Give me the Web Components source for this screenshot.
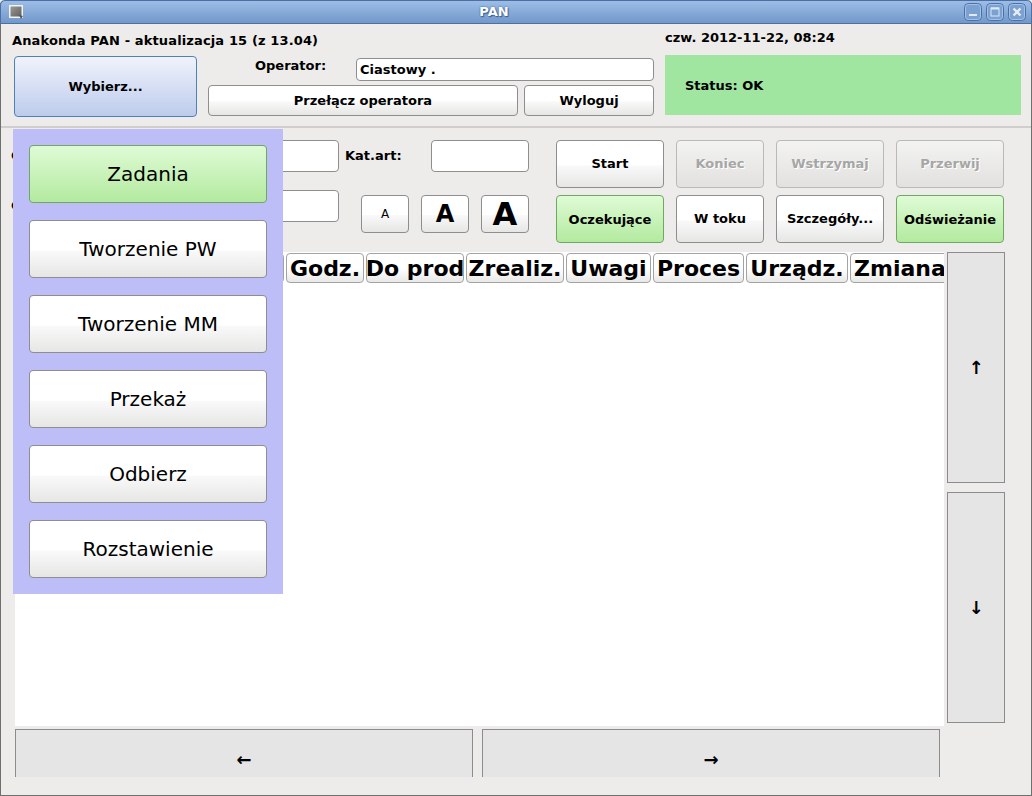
<!DOCTYPE html>
<html lang="pl">
<head>
<meta charset="utf-8">
<title>PAN</title>
<style>
  html, body { margin: 0; padding: 0; height: 100%; background: #edecea; }
  body { font: bold 13px "DejaVu Sans", sans-serif; color: #000; overflow: hidden; }
</style>
</head>
<body>
<pan-window>
  <pan-titlebar slot="title">PAN</pan-titlebar>

  <pan-header>
    <span slot="title">Anakonda PAN - aktualizacja 15 (z 13.04)</span>
    <pan-button slot="choose" variant="blue" style="width:183px;height:61px">Wybierz...</pan-button>
    <span slot="operator">Operator:</span>
    <pan-field slot="operator-field" style="width:298px;height:23px">Ciastowy .</pan-field>
    <pan-button slot="switch" style="width:310px;height:31px">Przełącz operatora</pan-button>
    <pan-button slot="logout" style="width:130px;height:31px">Wyloguj</pan-button>
    <span slot="date">czw. 2012-11-22, 08:24</span>
    <span slot="status">Status: OK</span>
  </pan-header>

  <pan-controls>
    <span slot="label1">C</span>
    <pan-field slot="field1" style="width:150px;height:32px"></pan-field>
    <span slot="label2">Kat.art:</span>
    <pan-field slot="field2" style="width:98px;height:32px"></pan-field>
    <span slot="label3">C</span>
    <pan-field slot="field3" style="width:150px;height:32px"></pan-field>
    <pan-button slot="size" style="width:48px;height:38px;font-size:12px;font-weight:normal">A</pan-button>
    <pan-button slot="size" style="width:48px;height:38px;font-size:24px">A</pan-button>
    <pan-button slot="size" style="width:48px;height:38px;font-size:32px">A</pan-button>

    <pan-button slot="action" lift>Start</pan-button>
    <pan-button slot="action" lift variant="disabled">Koniec</pan-button>
    <pan-button slot="action" lift variant="disabled">Wstrzymaj</pan-button>
    <pan-button slot="action" lift variant="disabled">Przerwij</pan-button>
    <pan-button slot="action" variant="green">Oczekujące</pan-button>
    <pan-button slot="action" lift>W toku</pan-button>
    <pan-button slot="action" lift>Szczegóły...</pan-button>
    <pan-button slot="action" variant="green">Odświeżanie</pan-button>
  </pan-controls>

  <pan-table>
    <pan-cell width="269"></pan-cell>
    <pan-cell width="78">Godz.</pan-cell>
    <pan-cell width="98">Do prod</pan-cell>
    <pan-cell width="98">Zrealiz.</pan-cell>
    <pan-cell width="85">Uwagi</pan-cell>
    <pan-cell width="91">Proces</pan-cell>
    <pan-cell width="102">Urządz.</pan-cell>
    <pan-cell width="100">Zmiana</pan-cell>
    <pan-flat slot="scroll" style="height:231px">↑</pan-flat>
    <pan-flat slot="scroll" style="height:231px">↓</pan-flat>
    <pan-flat slot="page" style="width:458px;height:60px">←</pan-flat>
    <pan-flat slot="page" style="width:458px;height:60px">→</pan-flat>
  </pan-table>

  <pan-menu slot="menu">
    <pan-button variant="green">Zadania</pan-button>
    <pan-button>Tworzenie PW</pan-button>
    <pan-button>Tworzenie MM</pan-button>
    <pan-button>Przekaż</pan-button>
    <pan-button>Odbierz</pan-button>
    <pan-button>Rozstawienie</pan-button>
  </pan-menu>
</pan-window>

<script>
// small helper, every element just stamps its markup into an open shadow root
class PanElement extends HTMLElement {
  constructor() {
    super();
    this.attachShadow({ mode: 'open' });
  }

  connectedCallback() {
    this.shadowRoot.innerHTML = this.markup();
  }
}

class PanWindow extends PanElement {
  markup() {
    return `
      <style>
        :host {
          display: flex;
          flex-direction: column;
          position: relative;
          box-sizing: border-box;
          width: 1032px;
          height: 796px;
          border: 1px solid #6f6f6f;
          border-top: 0;
          border-radius: 5px 5px 0 0;
          background: #edecea;
        }
        .menu {
          position: absolute;
          left: 12px;
          top: 129px;
        }
      </style>
      <slot name="title"></slot>
      <slot></slot>
      <div class="menu"><slot name="menu"></slot></div>
    `;
  }
}

class PanTitlebar extends PanElement {
  markup() {
    return `
      <style>
        :host {
          display: flex;
          align-items: center;
          flex: none;
          box-sizing: border-box;
          height: 24px;
          margin: 0 -1px;
          padding: 0 5px 1px 7px;
          background: linear-gradient(#9cbde6, #7298ca);
          border: 1px solid #4c70a4;
          border-radius: 5px 5px 0 0;
          color: #fff;
          font-weight: bold;
          font-size: 13px;
        }
        .name {
          flex: 1;
          text-align: center;
          text-shadow: 0 0 2px #3a5f96, 1px 1px 1px #3a5f96;
        }
        .icon { width: 16px; height: 16px; display: block; }
        .buttons { display: flex; gap: 4px; }
        .buttons svg { width: 18px; height: 18px; display: block; }
      </style>
      <svg class="icon" viewBox="0 0 16 16">
        <defs>
          <linearGradient id="ic" x1="0" y1="0" x2="1" y2="1">
            <stop offset="0" stop-color="#9a9a96"/>
            <stop offset="1" stop-color="#5f615e"/>
          </linearGradient>
        </defs>
        <rect x="1" y="1" width="14" height="13" fill="#f2f2f0"/>
        <rect x="2.5" y="2.5" width="11" height="10" fill="url(#ic)"/>
        <path d="M11 11l4 1-2 3z" fill="#555"/>
      </svg>
      <div class="name"><slot></slot></div>
      <div class="buttons">
        <svg viewBox="0 0 18 18">
          <rect x=".5" y=".5" width="17" height="17" rx="4" fill="#7ba0d2" stroke="#4c70a4"/>
          <rect x="1.5" y="1.5" width="15" height="15" rx="3" fill="none" stroke="#a5c1e6"/>
          <rect x="5" y="11" width="8" height="2" fill="#dfe9f7"/>
        </svg>
        <svg viewBox="0 0 18 18">
          <rect x=".5" y=".5" width="17" height="17" rx="4" fill="#7ba0d2" stroke="#4c70a4"/>
          <rect x="1.5" y="1.5" width="15" height="15" rx="3" fill="none" stroke="#a5c1e6"/>
          <rect x="5" y="5" width="8" height="8" fill="none" stroke="#dfe9f7" stroke-width="1"/>
          <rect x="5" y="4.5" width="8" height="2" fill="#dfe9f7"/>
        </svg>
        <svg viewBox="0 0 18 18">
          <rect x=".5" y=".5" width="17" height="17" rx="4" fill="#7ba0d2" stroke="#4c70a4"/>
          <rect x="1.5" y="1.5" width="15" height="15" rx="3" fill="none" stroke="#a5c1e6"/>
          <path d="M5.5 5.5l7 7M12.5 5.5l-7 7" stroke="#e6edf8" stroke-width="2.4"/>
        </svg>
      </div>
    `;
  }
}

class PanButton extends PanElement {
  markup() {
    return `
      <style>
        :host {
          display: flex;
          align-items: center;
          justify-content: center;
          box-sizing: border-box;
          border: 1px solid #8e8e8e;
          border-radius: 4px;
          background: linear-gradient(#fff 0, #fff 52%, #f9f9f9 54%, #e6e6e5 100%);
          white-space: nowrap;
          overflow: hidden;
        }
        :host([lift]) { padding-bottom: 2px; }
        :host([variant="green"]) {
          border-color: #6fa860;
          background: linear-gradient(#dffbd6, #b3ea9f);
        }
        :host([variant="blue"]) {
          border-color: #4d82b8;
          background: linear-gradient(#f0f3fc, #bdcbec);
        }
        :host([variant="disabled"]) {
          border-color: #b9b9b7;
          background: linear-gradient(#f3f3f1, #e2e1df);
          color: #a6a6a6;
          text-shadow: 1px 1px 0 #fff;
        }
      </style>
      <slot></slot>
    `;
  }
}

class PanField extends PanElement {
  markup() {
    return `
      <style>
        :host {
          display: flex;
          align-items: center;
          box-sizing: border-box;
          padding: 0 3px;
          border: 1px solid #8e8e8e;
          border-radius: 4px;
          background: #fff;
        }
      </style>
      <slot></slot>
    `;
  }
}

class PanFlat extends PanElement {
  markup() {
    return `
      <style>
        :host {
          display: flex;
          align-items: center;
          justify-content: center;
          flex: none;
          box-sizing: border-box;
          border: 1px solid #8c8c8c;
          background: #e5e5e5;
          font: bold 18px "DejaVu Sans", sans-serif;
        }
      </style>
      <slot></slot>
    `;
  }
}

class PanHeader extends PanElement {
  markup() {
    return `
      <style>
        :host {
          display: flex;
          flex: none;
          box-sizing: border-box;
          height: 104px;
          padding-left: 11px;
          border-bottom: 2px solid #cfcecc;
        }
        .left { width: 653px; }
        .title { height: 32px; display: flex; align-items: center; letter-spacing: .13px; }
        .row { display: flex; gap: 11px; margin-left: 2px; letter-spacing: 0; }
        .operator { display: flex; flex-direction: column; gap: 4px; padding-top: 2px; }
        .line { display: flex; gap: 6px; }
        .opname { width: 148px; margin-right: -6px; padding: 0 0 0 47px; box-sizing: border-box; height: 15px; }
        .right { width: 356px; }
        .date { height: 27px; padding-bottom: 4px; display: flex; align-items: center; }
        .status {
          height: 60px;
          display: flex;
          align-items: center;
          padding-left: 20px;
          background: #a0e6a0;
        }
      </style>
      <div class="left">
        <div class="title"><slot name="title"></slot></div>
        <div class="row">
          <slot name="choose"></slot>
          <div class="operator">
            <div class="line">
              <div class="opname"><slot name="operator"></slot></div>
              <slot name="operator-field"></slot>
            </div>
            <div class="line">
              <slot name="switch"></slot>
              <slot name="logout"></slot>
            </div>
          </div>
        </div>
      </div>
      <div class="right">
        <div class="date"><slot name="date"></slot></div>
        <div class="status"><slot name="status"></slot></div>
      </div>
    `;
  }
}

class PanControls extends PanElement {
  markup() {
    return `
      <style>
        :host {
          display: flex;
          flex: none;
          gap: 27px;
          padding: 12px 0 0 10px;
          height: 124px;
          box-sizing: border-box;
        }
        .filters { width: 518px; display: flex; flex-direction: column; gap: 18px; }
        .line { display: flex; height: 32px; }
        .lab { width: 178px; line-height: 31px; }
        .kat { width: 92px; padding-left: 6px; box-sizing: border-box; line-height: 31px; }
        .sizes { display: flex; gap: 12px; margin: 5px 0 0 22px; }
        .actions {
          display: grid;
          grid-template-columns: 108px 88px 108px 108px;
          grid-template-rows: 48px 48px;
          column-gap: 12px;
          row-gap: 7px;
        }
      </style>
      <div class="filters">
        <div class="line">
          <div class="lab"><slot name="label1"></slot></div>
          <slot name="field1"></slot>
          <div class="kat"><slot name="label2"></slot></div>
          <slot name="field2"></slot>
        </div>
        <div class="line">
          <div class="lab"><slot name="label3"></slot></div>
          <slot name="field3"></slot>
          <div class="sizes"><slot name="size"></slot></div>
        </div>
      </div>
      <div class="actions"><slot name="action"></slot></div>
    `;
  }
}

class PanTable extends PanElement {
  markup() {
    return `
      <style>
        :host {
          display: grid;
          grid-template-columns: 929px 58px;
          column-gap: 3px;
          grid-template-rows: 474px 48px;
          row-gap: 3px;
          padding: 0 0 0 14px;
        }
        .sheet {
          display: flex;
          align-items: flex-start;
          gap: 2px;
          padding-top: 1px;
          background: #fff;
          overflow: hidden;
          box-sizing: border-box;
        }
        .scroll { display: flex; flex-direction: column; gap: 9px; }
        .pages {
          grid-column: 1 / 3;
          display: flex;
          gap: 9px;
          height: 48px;
          overflow: hidden;
        }
      </style>
      <div class="sheet"><slot></slot></div>
      <div class="scroll"><slot name="scroll"></slot></div>
      <div class="pages"><slot name="page"></slot></div>
    `;
  }
}

class PanCell extends PanElement {
  markup() {
    return `
      <style>
        :host {
          display: flex;
          align-items: center;
          justify-content: center;
          flex: none;
          box-sizing: border-box;
          width: ${this.getAttribute('width')}px;
          height: 30px;
          border: 1px solid #a3a3a3;
          border-radius: 4px;
          background: linear-gradient(#fff 0, #fff 50%, #e8e8e7 100%);
          font-size: 22px;
          white-space: nowrap;
          overflow: hidden;
        }
      </style>
      <slot></slot>
    `;
  }
}

class PanMenu extends PanElement {
  markup() {
    return `
      <style>
        :host {
          display: flex;
          flex-direction: column;
          gap: 17px;
          box-sizing: border-box;
          width: 270px;
          padding: 16px;
          background: #bdbdf8;
          font-weight: normal;
          font-size: 20px;
        }
        ::slotted(pan-button) { height: 58px; }
      </style>
      <slot></slot>
    `;
  }
}

customElements.define('pan-window', PanWindow);
customElements.define('pan-titlebar', PanTitlebar);
customElements.define('pan-button', PanButton);
customElements.define('pan-field', PanField);
customElements.define('pan-flat', PanFlat);
customElements.define('pan-header', PanHeader);
customElements.define('pan-controls', PanControls);
customElements.define('pan-table', PanTable);
customElements.define('pan-cell', PanCell);
customElements.define('pan-menu', PanMenu);
</script>
</body>
</html>
